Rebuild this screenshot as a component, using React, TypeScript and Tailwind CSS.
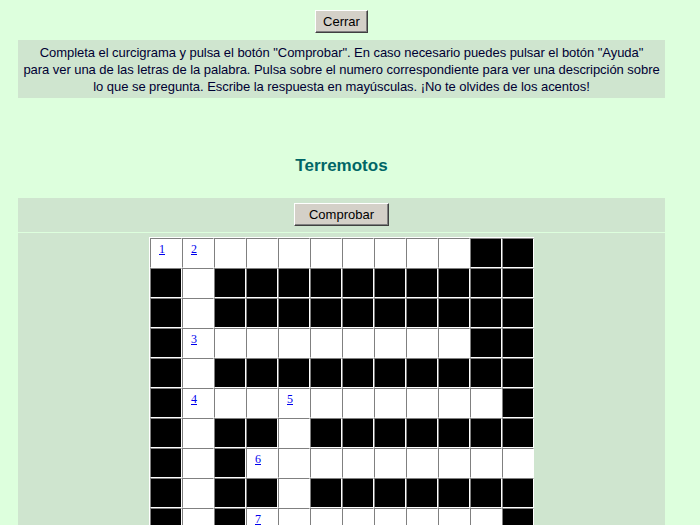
import React from "react";

// B = black cell, W = white cell, numbers = white cell with a clue link
type Cell = "B" | "W" | number;

const rows: Cell[][] = [
  [1, 2, "W", "W", "W", "W", "W", "W", "W", "W", "B", "B"],
  ["B", "W", "B", "B", "B", "B", "B", "B", "B", "B", "B", "B"],
  ["B", "W", "B", "B", "B", "B", "B", "B", "B", "B", "B", "B"],
  ["B", 3, "W", "W", "W", "W", "W", "W", "W", "W", "B", "B"],
  ["B", "W", "B", "B", "B", "B", "B", "B", "B", "B", "B", "B"],
  ["B", 4, "W", "W", 5, "W", "W", "W", "W", "W", "W", "B"],
  ["B", "W", "B", "B", "W", "B", "B", "B", "B", "B", "B", "B"],
  ["B", "W", "B", 6, "W", "W", "W", "W", "W", "W", "W", "W"],
  ["B", "W", "B", "B", "W", "B", "B", "B", "B", "B", "B", "B"],
  ["B", "W", "B", 7, "W", "W", "W", "W", "W", "W", "W", "B"],
  ["B", "W", "B", "B", "W", "B", "B", "B", "B", "B", "B", "B"],
  ["B", "W", "B", "B", "W", "B", "B", "B", "B", "B", "B", "B"],
];

function WinButton({ children, className = "" }: { children: React.ReactNode; className?: string }) {
  return (
    <button
      className={`h-[23px] px-[7px] bg-[#d4d0c8] text-[13px] text-black border border-t-white border-l-white border-r-[#404040] border-b-[#404040] shadow-[inset_-1px_-1px_0_#808080] leading-none ${className}`}
    >
      {children}
    </button>
  );
}

export default function App() {
  return (
    <div className="min-h-[525px] bg-[#ddffdd] font-['Liberation_Sans',Arial,sans-serif] text-[#000033]">
      <div className="w-[683px] px-[18px] pt-[10px] flex flex-col items-center">
        {/* Close */}
        <WinButton>Cerrar</WinButton>

        {/* Instructions */}
        <div className="mt-[7px] w-full bg-[#cfe5cf] pt-[4px] pb-[3px] text-center text-[13px] leading-[17px] tracking-[-0.05px] whitespace-nowrap">
          Completa el curcigrama y pulsa el botón "Comprobar". En caso necesario puedes pulsar el botón "Ayuda"
          <br />
          para ver una de las letras de la palabra. Pulsa sobre el numero correspondiente para ver una descripción sobre
          <br />
          lo que se pregunta. Escribe la respuesta en mayúsculas. ¡No te olvides de los acentos!
        </div>

        {/* Title */}
        <h2 className="mt-[57px] mb-[21px] text-[17px] leading-[22px] font-bold text-[#006666]">Terremotos</h2>

        {/* Check */}
        <div className="w-full bg-[#cfe5cf] pt-[5px] pb-[6px] flex justify-center">
          <WinButton className="w-[95px]">Comprobar</WinButton>
        </div>

        {/* Grid */}
        <div className="mt-px w-full bg-[#cfe5cf] pt-[4px] pb-4 flex justify-center">
          <div className="grid grid-cols-[repeat(12,32px)] border-t border-l border-white bg-white">
            {rows.flat().map((c, i) => (
              <div
                key={i}
                className={`h-[30px] border border-t-[#808080] border-l-[#808080] border-r-white border-b-white ${
                  c === "B" ? "bg-black" : "bg-white"
                }`}
              >
                {typeof c === "number" && (
                  <a
                    href="#"
                    className="block pl-[8px] pt-[3px] text-[12px] leading-[14px] text-[#0000ee] underline font-['Liberation_Serif',serif]"
                  >
                    {c}
                  </a>
                )}
              </div>
            ))}
          </div>
        </div>
      </div>
    </div>
  );
}
